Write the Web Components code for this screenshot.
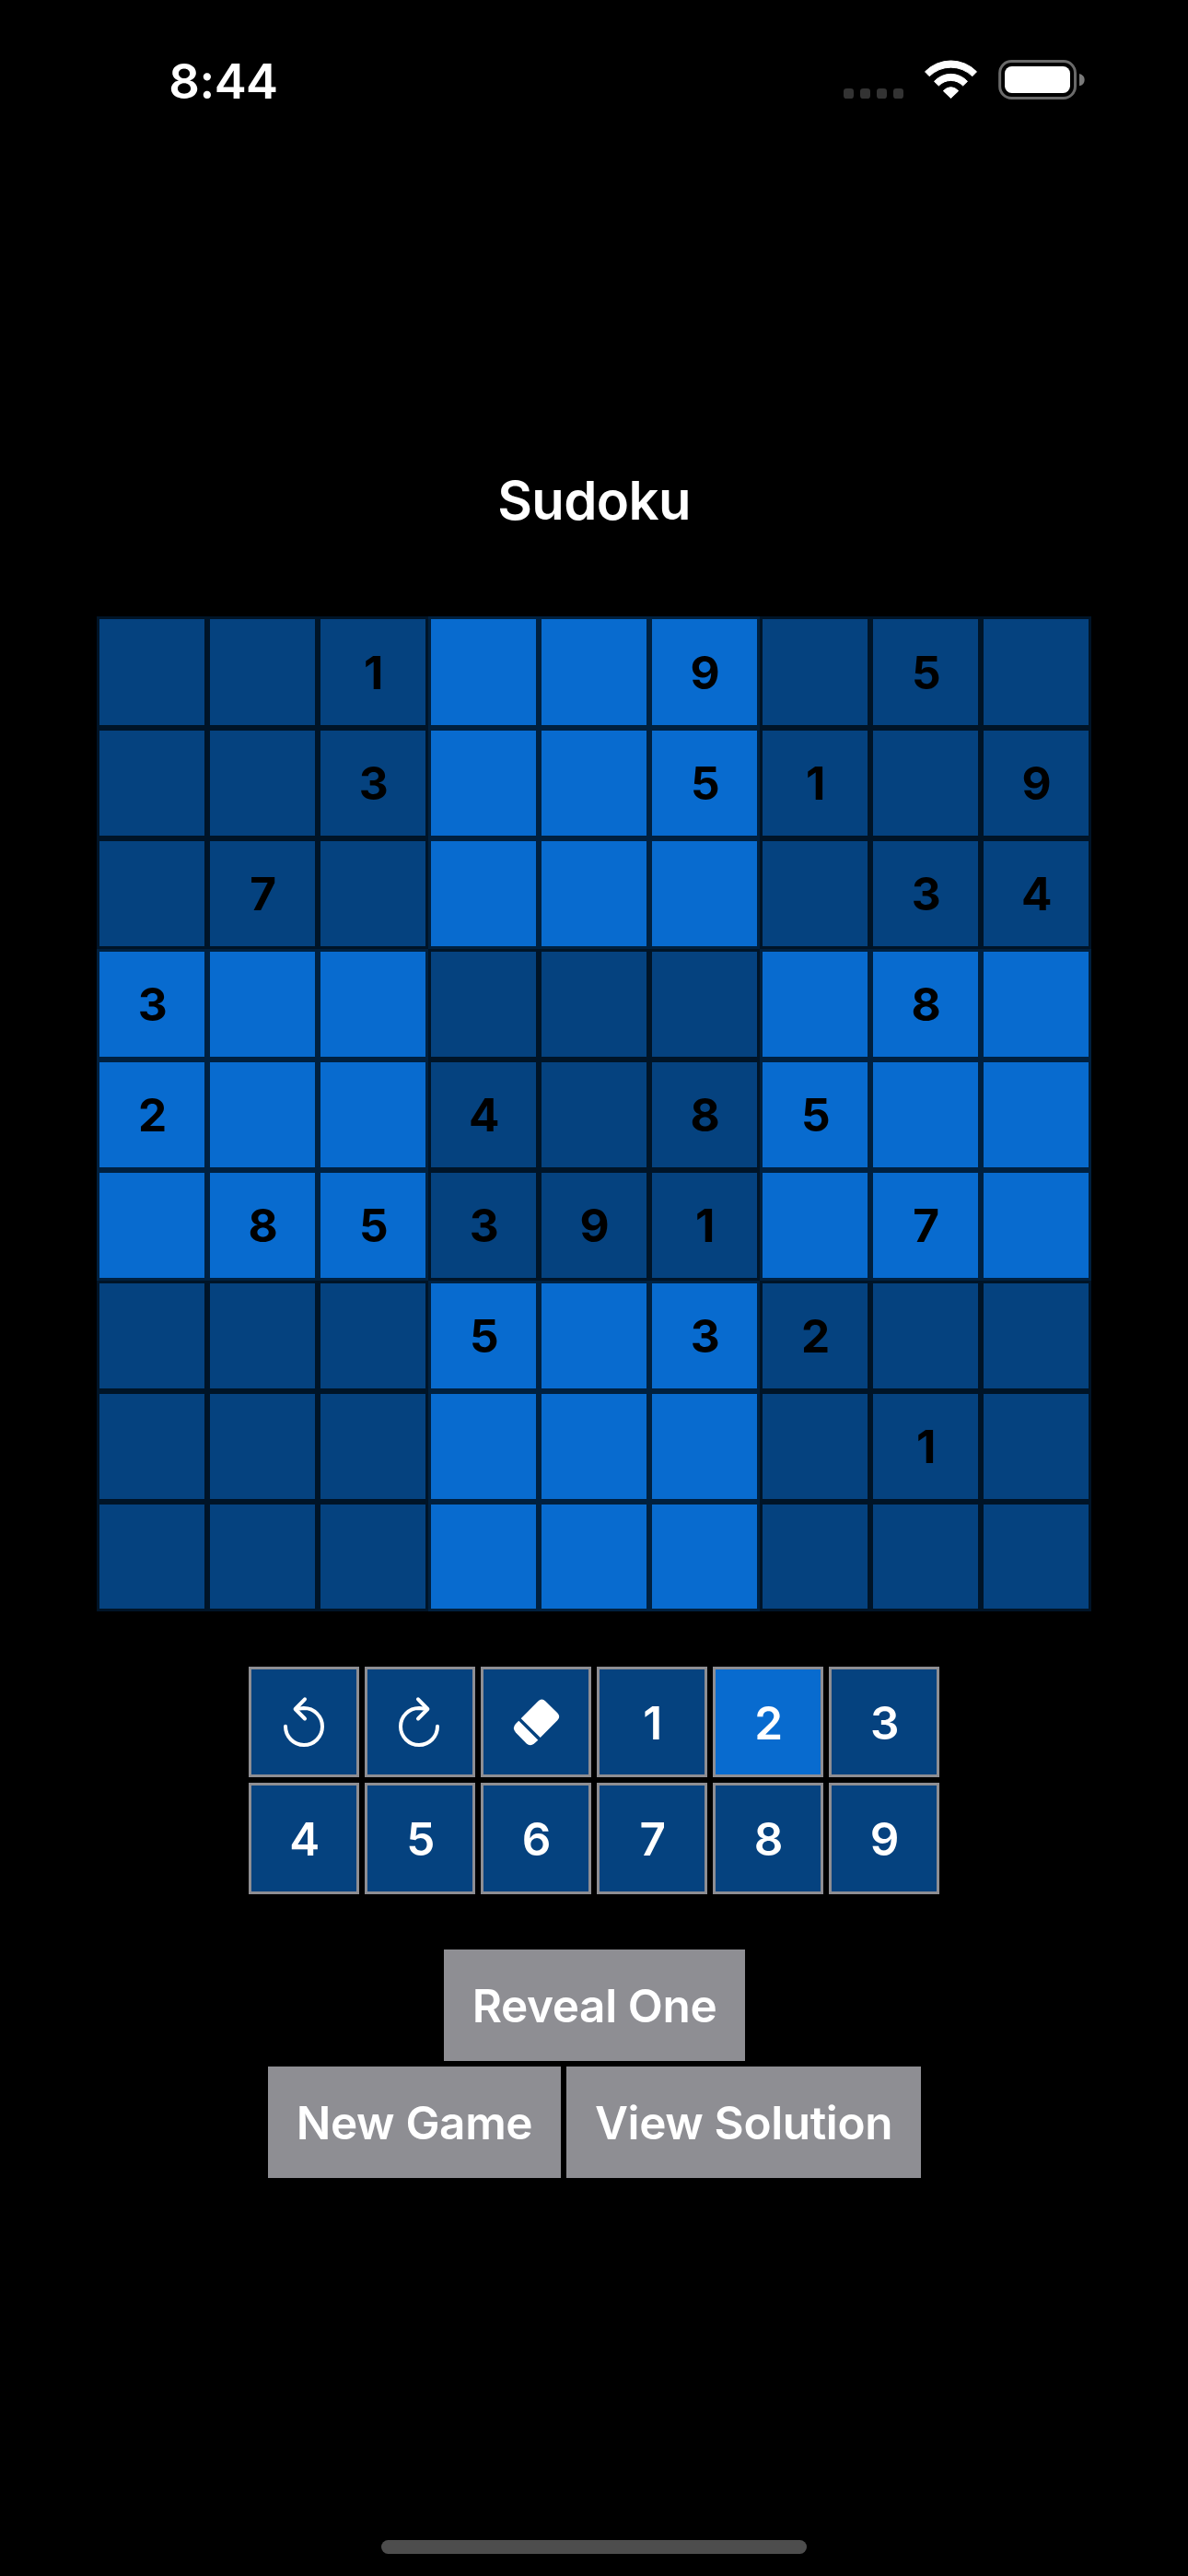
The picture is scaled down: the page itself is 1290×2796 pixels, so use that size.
<!DOCTYPE html>
<html lang="en">
<head>
<meta charset="utf-8">
<title>Sudoku</title>
<style>
html, body { margin: 0; background: #000; }
body { width: 1290px; height: 2796px; overflow: hidden; font-family: Inter, "Liberation Sans", sans-serif; color: #fff; }
</style>
</head>
<body>
<sudoku-app></sudoku-app>
<script>
class BaseElement extends HTMLElement {
  render(html) {
    const root = this.attachShadow({ mode: 'open' });
    const t = document.createElement('template');
    t.innerHTML = html;
    root.appendChild(t.content.cloneNode(true));
  }
}

customElements.define('status-bar', class extends BaseElement {
  connectedCallback() {
    this.render(`
      <style>
        :host { display: flex; justify-content: space-between; height: 176px; box-sizing: border-box; padding: 0 90px 0 183.3px; }
        .time { font-size: 52.5px; font-weight: 600; letter-spacing: -0.5px; line-height: 176px; }
        svg { display: block; width: 300px; height: 80px; margin-top: 50px; }
      </style>
      <span class="time">8:44</span>
      <svg viewBox="0 0 900 240">
        <g fill="#333">
          <rect x="48" y="138" width="33" height="33" rx="10"/>
          <rect x="102" y="138" width="33" height="33" rx="10"/>
          <rect x="156" y="138" width="33" height="33" rx="10"/>
          <rect x="210" y="138" width="33" height="33" rx="10"/>
        </g>
        <g fill="#fff" stroke="#fff" stroke-width="3" stroke-linejoin="round">
          <path d="M313.5 83.5A117 117 0 0 1 481.500 83.500L467.500 98A100 100 0 0 0 327.500 98Z"/>
          <path d="M343.500 115A73 73 0 0 1 451.500 115L437 129A55 55 0 0 0 358 129Z"/>
          <path d="M373 146Q384 134 397.500 134Q411 134 422 146L397.500 169.500Z"/>
        </g>
        <rect x="557" y="49.500" width="245.500" height="120" rx="38" fill="none" stroke="#6a6a6a" stroke-width="9"/>
        <rect x="573" y="66" width="213" height="87" rx="23" fill="#fff"/>
        <path d="M816 90Q833 95 833 110Q833 125 816 130Z" fill="#7a7a7a"/>
      </svg>`);
  }
});

customElements.define('sudoku-board', class extends BaseElement {
  connectedCallback() {
    const rows = ['001009050', '003005109', '070000034', '300000080', '200408500', '085391070', '000503200', '000000010', '000000000'];
    const cells = rows.map((r, y) => [...r].map((d, x) => {
      const light = (Math.floor(y / 3) + Math.floor(x / 3)) % 2;
      return `<div class="cell${light ? ' light' : ''}${y === 0 ? ' first' : ''}">${d === '0' ? '' : d}</div>`;
    }).join('')).join('');
    this.render(`
      <style>
        :host { display: grid; grid-template-columns: repeat(9, 120px); grid-template-rows: 121px repeat(7, 120px) 119px; }
        .cell { box-sizing: border-box; border: 3px solid #001427; background: #05427f; color: #000; text-align: center; font-size: 49.5px; font-weight: 700; line-height: 114px; padding-left: 1.4px; overflow: hidden; }
        .first { line-height: 116px; }
        .light { background: #086bcf; border-color: #00203f; }
      </style>${cells}`);
  }
});

customElements.define('pad-key', class extends BaseElement {
  connectedCallback() {
    this.render(`
      <style>
        :host { display: block; box-sizing: border-box; border: 3px solid #8e8e93; background: #05427f; overflow: hidden; font-size: 49.5px; font-weight: 600; line-height: 116px; text-align: center; padding-left: 1.4px; }
        :host([selected]) { background: #086bcf; }
        :host([icon]) { padding-left: 0; }
        ::slotted(svg) { display: block; width: 120px; height: 120px; margin: -3px; }
      </style><slot></slot>`);
  }
});

customElements.define('number-pad', class extends BaseElement {
  connectedCallback() {
    const stroke = 'fill="none" stroke="#fff" stroke-width="4" stroke-linecap="round" stroke-linejoin="round"';
    const undo = `<svg viewBox="0 0 120 120" ${stroke}><path d="M40 64.800A20 20 0 1 0 60 45L51 46M61 35.300L50.600 46L61 56.500"/></svg>`;
    const redo = `<svg viewBox="0 0 120 120" ${stroke}><path d="M79 64.800A20 20 0 1 1 59 45L68 46M58 35.300L68.400 46L58 56.500"/></svg>`;
    const eraser = `<svg viewBox="0 0 120 120" fill="#fff"><path d="M62.300 37.500Q66.300 33.500 70.300 37.500L83.300 50.300Q87.300 54.300 83.300 58.300L64.700 77L43.700 56.300Z"/><path d="M41.300 58.700L62.300 79.700L58 83.500Q53.700 87.200 49.500 83.300L38 71.500Q33.800 66.500 38 62Z"/></svg>`;
    this.render(`
      <style>
        :host { display: grid; grid-template-columns: repeat(6, 120px); grid-template-rows: 120px 121px; gap: 6px; }
      </style>
      <pad-key icon>${undo}</pad-key><pad-key icon>${redo}</pad-key><pad-key icon>${eraser}</pad-key>
      ${[1, 2, 3, 4, 5, 6, 7, 8, 9].map(n => `<pad-key${n === 2 ? ' selected' : ''}>${n}</pad-key>`).join('')}`);
  }
});

customElements.define('action-button', class extends BaseElement {
  connectedCallback() {
    this.render(`
      <style>
        :host { display: block; height: 121px; background: #8e8e93; font-size: 49.5px; font-weight: 600; letter-spacing: -0.37px; line-height: 122px; text-align: center; white-space: nowrap; overflow: hidden; }
      </style><slot></slot>`);
  }
});

customElements.define('sudoku-app', class extends BaseElement {
  connectedCallback() {
    this.render(`
      <style>
        :host { display: flex; flex-direction: column; align-items: center; width: 1290px; height: 2796px; background: #000; }
        status-bar { align-self: stretch; flex: none; }
        h1 { margin: 317px 0 76px; font-size: 58px; font-weight: 600; letter-spacing: -0.6px; line-height: 100px; }
        number-pad { margin: 60px 0; }
        .actions { display: flex; flex-direction: column; align-items: center; gap: 6px; }
        .row { display: flex; gap: 6px; padding-left: 1px; }
        .reveal { width: 327px; margin-left: 1px; }
        .new { width: 318px; }
        .view { width: 385px; }
        .home { width: 462px; height: 15px; border-radius: 8px; background: #4d4d4d; margin-top: auto; margin-bottom: 24px; }
      </style>
      <status-bar></status-bar>
      <h1>Sudoku</h1>
      <sudoku-board></sudoku-board>
      <number-pad></number-pad>
      <div class="actions">
        <action-button class="reveal">Reveal One</action-button>
        <div class="row">
          <action-button class="new">New Game</action-button>
          <action-button class="view">View Solution</action-button>
        </div>
      </div>
      <div class="home"></div>`);
  }
});
</script>
</body>
</html>
